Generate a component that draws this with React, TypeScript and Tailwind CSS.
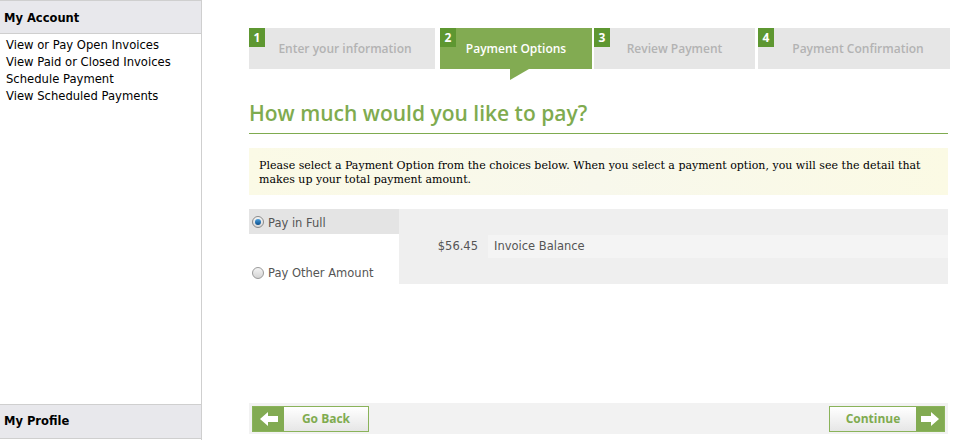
import React from "react";

const verdana = { fontFamily: '"DejaVu Sans", Verdana, sans-serif' };
const segoe = { fontFamily: '"Open Sans", "Noto Sans", sans-serif' };

function Step({ n, label, active, w, ml, pl }: { n: number; label: string; active?: boolean; w: string; ml: string; pl: string }) {
  return (
    <div className={`relative h-[41px] shrink-0 ${w} ${ml} ${active ? "bg-[#82ab52]" : "bg-[#e6e6e6]"}`}>
      <div className="absolute left-0 top-0 flex h-[19px] w-[16px] items-center justify-center bg-[#5e9731] text-[12px] font-bold text-white" style={segoe}>
        {n}
      </div>
      <div
        className={`flex h-full items-center justify-center ${pl} pt-[1px] text-[12px] font-semibold ${active ? "text-white" : "text-[#b3b3b3]"}`}
        style={segoe}
      >
        {label}
      </div>
      {active && (
        <svg className="absolute left-[70px] top-[41px]" width="19" height="11" viewBox="0 0 19 11">
          <polygon points="0,0 19,0 0,11" fill="#82ab52" />
        </svg>
      )}
    </div>
  );
}

function Arrow({ dir }: { dir: "left" | "right" }) {
  return (
    <svg width="18" height="14" viewBox="0 0 18 14" style={{ transform: dir === "right" ? "scaleX(-1)" : undefined }}>
      <polygon points="0,7 8,0 8,4 18,4 18,10 8,10 8,14" fill="#fff" />
    </svg>
  );
}

export default function App() {
  return (
    <div className="flex h-[440px] w-[968px] bg-white">
      {/* Sidebar */}
      <div className="flex h-[440px] w-[202px] shrink-0 flex-col border-r border-t border-[#cfcfcf]" style={verdana}>
        <div className="flex h-[33px] items-center border-b border-[#cfcfcf] bg-[#e8e8ec] pl-[4px] pt-[3px] text-[11.5px] font-bold text-black">
          My Account
        </div>
        <div className="flex flex-col pl-[6px] pt-[3px] text-[11.6px] leading-[17px] text-black">
          <span>View or Pay Open Invoices</span>
          <span>View Paid or Closed Invoices</span>
          <span>Schedule Payment</span>
          <span>View Scheduled Payments</span>
        </div>
        <div className="flex-1" />
        <div className="mb-[1px] flex h-[35px] items-center border-y border-[#cfcfcf] bg-[#e8e8ec] pl-[4px] pt-[1px] text-[11.5px] font-bold text-black">
          My Profile
        </div>
      </div>

      {/* Main */}
      <div className="flex w-[702px] flex-col pl-[47px] pt-[28px]">
        <div className="flex">
          <Step n={1} label="Enter your information" w="w-[186px]" ml="ml-0" pl="pl-[6px]" />
          <Step n={2} label="Payment Options" active w="w-[152px]" ml="ml-[5px]" pl="pl-0" />
          <Step n={3} label="Review Payment" w="w-[161px]" ml="ml-[2px]" pl="pl-0" />
          <Step n={4} label="Payment Confirmation" w="w-[192px]" ml="ml-[3px]" pl="pl-[8px]" />
        </div>

        <h1 className="mt-[24px] h-[40px] text-[21px] font-semibold leading-[40px] text-[#7fab4f]" style={segoe}>
          How much would you like to pay?
        </h1>
        <div className="h-[1px] w-[699px] bg-[#7fab4f]" />

        <div
          className="mt-[14px] h-[47px] w-[699px] bg-gradient-to-r from-[#fbfae6] via-[#f8f8ec] to-[#fbfae4] px-[10px] pt-[11px] text-[11px] leading-[14px] text-black"
          style={{ fontFamily: '"DejaVu Serif", "Liberation Serif", serif' }}
        >
          Please select a Payment Option from the choices below. When you select a payment option, you will see the detail that makes up your total payment amount.
        </div>

        <div className="mt-[14px] flex w-[699px] text-[11.5px] text-[#555]" style={verdana}>
          <div className="flex w-[150px] flex-col">
            <div className="flex h-[25px] items-center gap-[4px] bg-[#e4e4e4] pl-[3px]">
              <span className="flex h-[12px] w-[12px] items-center justify-center rounded-full border border-[#8a8a8a] bg-gradient-to-b from-[#f4f4f4] to-[#d8d8d8]">
                <span className="h-[6px] w-[6px] rounded-full bg-gradient-to-b from-[#4aa0e0] to-[#0b4f8a]" />
              </span>
              <span className="pt-[5px]">Pay in Full</span>
            </div>
            <div className="flex h-[50px] items-end gap-[4px] pb-[2px] pl-[3px]">
              <span className="mb-[3px] h-[12px] w-[12px] rounded-full border border-[#9a9a9a] bg-gradient-to-b from-[#f4f4f4] to-[#d4d4d4]" />
              <span>Pay Other Amount</span>
            </div>
          </div>
          <div className="flex h-[75px] flex-1 flex-col bg-[#efefef]">
            <div className="h-[26px]" />
            <div className="flex h-[23px]">
              <div className="flex w-[80px] items-center justify-end pr-[1px] pt-[1px]">$56.45</div>
              <div className="ml-[9px] flex flex-1 items-center bg-[#f4f4f4] pl-[6px] pt-[1px]">Invoice Balance</div>
            </div>
          </div>
        </div>

        <div className="flex-1" />

        <div className="mb-[6px] flex h-[31px] w-[699px] items-center justify-between bg-[#f2f2f2] px-[3px]" style={segoe}>
          <div className="flex h-[26px] w-[117px] border border-[#8ab35a] bg-gradient-to-b from-white to-[#e6e6e6]">
            <div className="flex w-[31px] items-center justify-center bg-[#82ab52]">
              <Arrow dir="left" />
            </div>
            <div className="flex flex-1 items-center justify-center text-[12px] font-bold text-[#7fab4f]">Go Back</div>
          </div>
          <div className="flex h-[26px] w-[116px] border border-[#8ab35a] bg-gradient-to-b from-white to-[#e6e6e6]">
            <div className="flex flex-1 items-center justify-center text-[12px] font-bold text-[#7fab4f]">Continue</div>
            <div className="flex w-[28px] items-center justify-center bg-[#82ab52]">
              <Arrow dir="right" />
            </div>
          </div>
        </div>
      </div>
    </div>
  );
}
